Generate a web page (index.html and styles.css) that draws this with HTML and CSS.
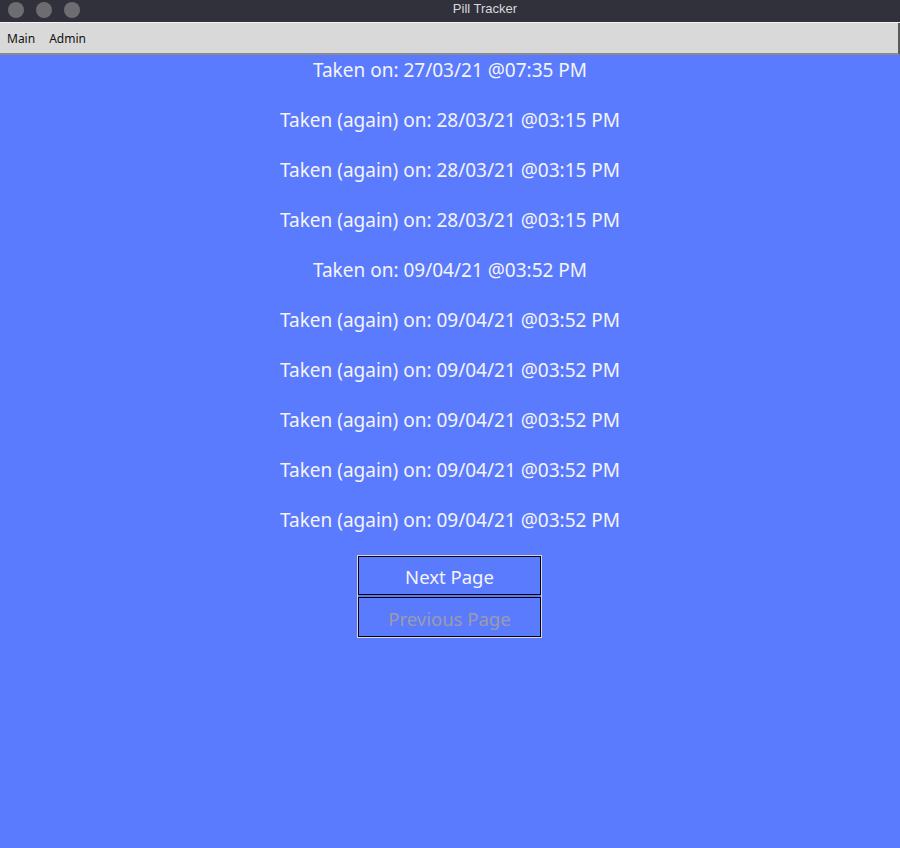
FILE: index.html
```html
<!DOCTYPE html>
<html>
<head>
<meta charset="utf-8">
<link rel="stylesheet" href="styles.css">
</head>
<body>
<div class="window">
  <div class="titlebar">
    <div class="lights"><span class="dot"></span><span class="dot"></span><span class="dot"></span></div>
    <div class="title">Pill Tracker</div>
  </div>
  <div class="menubar">
    <span class="menu-item">Main</span>
    <span class="menu-item">Admin</span>
  </div>
  <div class="content">
    <div class="entries">
      <div class="entry">Taken on: 27/03/21 @07:35 PM</div>
      <div class="entry">Taken (again) on: 28/03/21 @03:15 PM</div>
      <div class="entry">Taken (again) on: 28/03/21 @03:15 PM</div>
      <div class="entry">Taken (again) on: 28/03/21 @03:15 PM</div>
      <div class="entry">Taken on: 09/04/21 @03:52 PM</div>
      <div class="entry">Taken (again) on: 09/04/21 @03:52 PM</div>
      <div class="entry">Taken (again) on: 09/04/21 @03:52 PM</div>
      <div class="entry">Taken (again) on: 09/04/21 @03:52 PM</div>
      <div class="entry">Taken (again) on: 09/04/21 @03:52 PM</div>
      <div class="entry">Taken (again) on: 09/04/21 @03:52 PM</div>
    </div>
    <div class="pager">
      <button class="btn">Next Page</button>
      <button class="btn disabled">Previous Page</button>
    </div>
  </div>
</div>
</body>
</html>
```

FILE: styles.css
```css
html, body {
  margin: 0;
  padding: 0;
  height: 100%;
}
body {
  font-family: "Noto Sans", "DejaVu Sans", sans-serif;
  background: #5b7bff;
}
.window {
  display: flex;
  flex-direction: column;
  height: 848px;
  width: 900px;
}
.titlebar {
  height: 22px;
  background: #31313b;
  position: relative;
  display: flex;
  align-items: center;
  justify-content: center;
  border-bottom: 1px solid #f4f4f4;
}
.lights {
  position: absolute;
  left: 8px;
  top: 2px;
  display: flex;
  gap: 12px;
}
.dot {
  width: 16px;
  height: 16px;
  border-radius: 50%;
  background: #6d6d71;
}
.title {
  color: #d8d8dc;
  font-family: "Liberation Sans", Arial, sans-serif;
  font-size: 13px;
  line-height: 18px;
  margin-top: -4px;
  margin-left: 70px;
}
.menubar {
  background: #d9d9d9;
  border-bottom: 2px solid #8a8a8a;
  border-right: 2px solid #5a5a5a;
  display: flex;
  align-items: center;
  gap: 14px;
  padding-left: 7px;
  box-sizing: border-box;
  height: 32px;
}
.menu-item {
  font-size: 12px;
  color: #111;
  padding-top: 1px;
}
.content {
  flex: 1;
  background: #5b7bff;
  display: flex;
  flex-direction: column;
  align-items: center;
}
.entries {
  display: flex;
  flex-direction: column;
  align-items: center;
  gap: 20px;
}
.entry {
  color: #f4f4f8;
  font-size: 19px;
  line-height: 30px;
  height: 30px;
}
.pager {
  margin-top: 20px;
  margin-left: -1px;
  width: 185px;
  border: 1px solid #d6d6e0;
  box-sizing: border-box;
  display: flex;
  flex-direction: column;
  gap: 2px;
  background: #5b7bff;
}
.btn {
  display: block;
  width: 100%;
  height: 39px;
  margin: 0;
  border: 1px solid #000;
  background: #5b7bff;
  color: #f4f4f8;
  font-family: "Noto Sans", "DejaVu Sans", sans-serif;
  font-size: 18.5px;
  padding: 2px 0 0 0;
  box-sizing: border-box;
}
.btn + .btn {
  height: 40px;
}
.btn.disabled {
  color: #9b9ca6;
}
```
